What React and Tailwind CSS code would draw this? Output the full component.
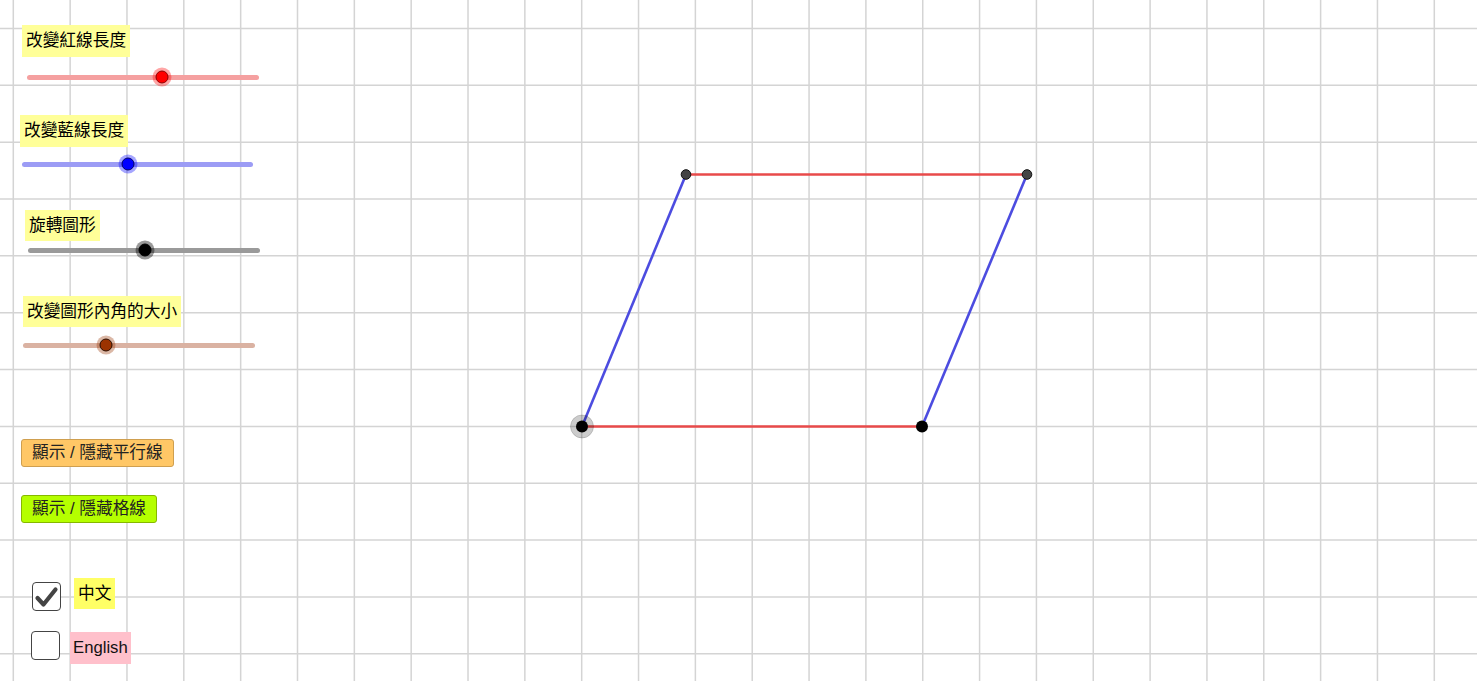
import React from 'react';

const FONT = { fontFamily: '"Liberation Sans", "Noto Sans CJK TC", sans-serif' };

const GRID = 56.84;
const OX = 13.3;
const OY = 28.5;

// ── Fondo cuadriculado + paralelogramo ──
const Canvas = () => {
    const vx = [];
    for (let x = OX; x < 1477; x += GRID) vx.push(x);
    const hy = [];
    for (let y = OY; y < 681; y += GRID) hy.push(y);

    return (
        <svg className="absolute inset-0" width="1477" height="681" viewBox="0 0 1477 681">
            {vx.map((x) => (
                <line key={'v' + x} x1={x} y1="0" x2={x} y2="681" stroke="#d4d4d4" strokeWidth="1.5" />
            ))}
            {hy.map((y) => (
                <line key={'h' + y} x1="0" y1={y} x2="1477" y2={y} stroke="#d4d4d4" strokeWidth="1.5" />
            ))}

            <line x1="686" y1="174.5" x2="1027" y2="174.5" stroke="#e84a4a" strokeWidth="2.3" />
            <line x1="582" y1="426.5" x2="922" y2="426.5" stroke="#e84a4a" strokeWidth="2.3" />
            <line x1="582" y1="426.5" x2="686" y2="174.5" stroke="#4c4ce0" strokeWidth="2.6" />
            <line x1="922" y1="426.5" x2="1027" y2="174.5" stroke="#4c4ce0" strokeWidth="2.6" />

            <circle cx="582" cy="426.5" r="11.5" fill="rgba(0,0,0,0.2)" stroke="rgba(0,0,0,0.15)" strokeWidth="1" />
            <circle cx="582" cy="426.5" r="6" fill="#000" />
            <circle cx="922" cy="426.5" r="6" fill="#000" />
            <circle cx="686" cy="174.5" r="4.8" fill="#444" stroke="#111" strokeWidth="1" />
            <circle cx="1027" cy="174.5" r="4.8" fill="#444" stroke="#111" strokeWidth="1" />
        </svg>
    );
};

const Label = ({ children, className, bg = 'bg-[#ffff99]' }) => (
    <div className={`self-start px-[4px] text-[16.7px] text-black ${bg} ${className}`}>{children}</div>
);

const Slider = ({ className, width, pos, track, halo, knob }) => (
    <div className={`relative h-[16px] ${className}`} style={{ width }}>
        <div className={`absolute left-0 right-0 top-[5.5px] h-[5px] rounded-full ${track}`} />
        <span
            className={`absolute top-1/2 -translate-x-1/2 -translate-y-1/2 w-[19px] h-[19px] rounded-full ${halo}`}
            style={{ left: pos }}
        />
        <span
            className={`absolute top-1/2 -translate-x-1/2 -translate-y-1/2 w-[13px] h-[13px] rounded-full border ${knob}`}
            style={{ left: pos }}
        />
    </div>
);

const Checkbox = ({ checked }) => (
    <div className="w-[29px] h-[29px] rounded-[4px] border-[1.5px] border-[#444] bg-white flex items-center justify-center">
        {checked && (
            <svg width="25" height="25" viewBox="0 0 25 25">
                <path d="M3.5 14 L9.5 20.5 L21.5 5.5" fill="none" stroke="#444" strokeWidth="4.2" strokeLinecap="round" strokeLinejoin="round" />
            </svg>
        )}
    </div>
);

const Panel = () => (
    <div className="relative flex flex-col pt-[25px]" style={FONT}>
        <Label className="ml-[22px] leading-[32px]">改變紅線長度</Label>
        <Slider
            className="ml-[27px] mt-[12px]"
            width={232}
            pos={135}
            track="bg-[#f5a0a0]"
            halo="bg-[rgba(255,0,0,0.35)]"
            knob="bg-[#ff0000] border-[#8a0000]"
        />

        <Label className="ml-[20px] mt-[30px] leading-[32px]">改變藍線長度</Label>
        <Slider
            className="ml-[22px] mt-[9px]"
            width={231}
            pos={106}
            track="bg-[#9c9cf5]"
            halo="bg-[rgba(0,0,255,0.35)]"
            knob="bg-[#0000ff] border-[#000066]"
        />

        <Label className="ml-[25px] mt-[38px] leading-[31px]">旋轉圖形</Label>
        <Slider
            className="ml-[28px] mt-[1px]"
            width={232}
            pos={117}
            track="bg-[#9a9a9a]"
            halo="bg-[rgba(0,0,0,0.4)]"
            knob="bg-black border-black"
        />

        <Label className="ml-[23px] mt-[38px] leading-[31px]">改變圖形內角的大小</Label>
        <Slider
            className="ml-[23px] mt-[10px]"
            width={232}
            pos={83}
            track="bg-[#dab2a2]"
            halo="bg-[rgba(153,51,0,0.35)]"
            knob="bg-[#9c3300] border-[#2a0d00]"
        />

        <button className="self-start ml-[21px] mt-[86px] h-[28px] px-[10px] rounded-[3px] border border-[#cf9f4f] bg-[#ffc766] text-[16.7px] text-[#222] leading-[26px]">
            顯示 / 隱藏平行線
        </button>
        <button className="self-start ml-[21px] mt-[28px] h-[28px] px-[10px] rounded-[3px] border border-[#86b800] bg-[#b5ff00] text-[16.7px] text-[#222] leading-[26px]">
            顯示 / 隱藏格線
        </button>

        <div className="flex items-start ml-[32px] mt-[55px]">
            <div className="mt-[4px]">
                <Checkbox checked />
            </div>
            <div className="ml-[13px] px-[4px] h-[31px] leading-[31px] bg-[#ffff66] text-[16.7px] text-black">中文</div>
        </div>
        <div className="flex items-start ml-[31px] mt-[20px]">
            <Checkbox />
            <div className="ml-[10px] mt-[1px] px-[3px] h-[32px] leading-[32px] bg-[#ffc0cb] text-[16.7px] text-[#111]">English</div>
        </div>
    </div>
);

export default function App() {
    return (
        <div className="relative w-full h-[681px] overflow-hidden bg-white">
            <Canvas />
            <Panel />
        </div>
    );
}
